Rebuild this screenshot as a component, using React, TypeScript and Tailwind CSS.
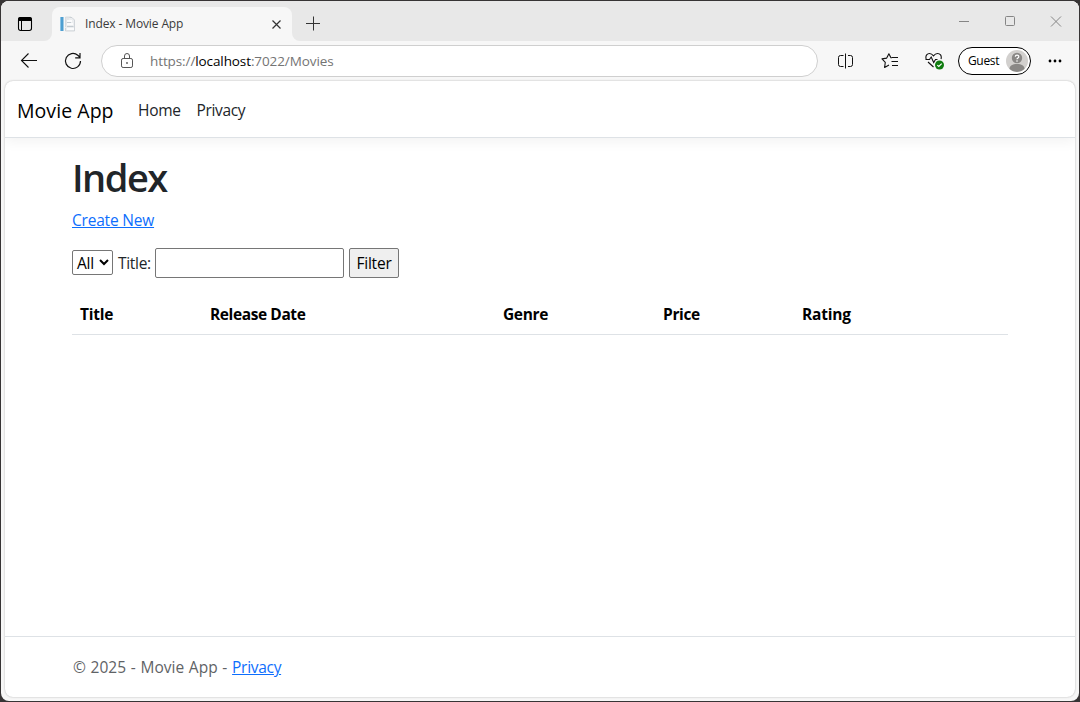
import React from 'react';

function TabActionsIcon() {
  return (
    <svg width="16" height="16" viewBox="0 0 16 16" fill="none">
      <rect x="1.5" y="1.5" width="13" height="13" rx="2.2" stroke="#000" strokeWidth="1.1" />
      <path d="M1 5V3.4A2.4 2.4 0 0 1 3.4 1h9.2a2.4 2.4 0 0 1 2.4 2.4V5z" fill="#000" />
      <path d="M4.5 5v9.500" stroke="#000" />
    </svg>
  );
}

function Favicon() {
  return (
    <svg width="17" height="16" viewBox="0 0 17 16" fill="none">
      <path d="M6.5 1h5.5l2 2v8H6.500z" fill="#e4e6e9" stroke="#cfd4d9" strokeWidth=".7" />
      <path d="M10.500 1.500h2.500l2.500 2.500v11H6.500v-3" fill="#eceef0" stroke="#c3c8ce" strokeWidth=".7" />
      <path d="M8 5h5M8 8h6M8 13h7" stroke="#fff" strokeWidth="1.300" />
      <path d="M8 10.500h6.500M8 6.500h4" stroke="#b8c0c8" strokeWidth=".8" />
      <rect x="1" y="1" width="3.500" height="14" fill="#4e9fd1" />
      <rect x="1" y="1" width="1" height="14" fill="#8cc4e6" />
    </svg>
  );
}

function TabStrip() {
  return (
    <div className="flex h-10 bg-[#f7f7f7]">
      <div className="flex w-[51px] rounded-br-lg bg-[#e8e8e8] pt-[15px] pl-4">
        <TabActionsIcon />
      </div>
      <div className="w-60 bg-[#e8e8e8] pt-1.5">
        <div className="flex h-[34px] items-center rounded-t-lg bg-[#f7f7f7] pr-[11px] pl-[7px]">
          <Favicon />
          <span className="ml-[9px] flex-1 text-[12px] tracking-[-0.12px] text-[#3b3b3b]">Index - Movie App</span>
          <svg className="mt-px" width="9" height="9" viewBox="0 0 9 9" stroke="#333" strokeWidth="1.2">
            <path d="M.5.5l8 8M8.500.5l-8 8" />
          </svg>
        </div>
      </div>
      <div className="flex flex-1 items-start rounded-bl-lg bg-[#e8e8e8] pt-[15px] pr-[17px] pl-[14px]">
        <svg width="16" height="16" viewBox="0 0 16 16" stroke="#333">
          <path d="M0 7.500h14M7.500.5v14" />
        </svg>
        <div className="ml-auto flex gap-[34px] text-[#858585]">
          <svg width="12" height="12" viewBox="0 0 12 12" stroke="currentColor"><path d="M1 5.500h10" /></svg>
          <svg width="12" height="12" viewBox="0 0 12 12" fill="none" stroke="currentColor"><rect x="1.500" y=".5" width="9" height="9" rx="1" /></svg>
          <svg width="12" height="12" viewBox="0 0 12 12" stroke="currentColor"><path d="M1 .5l10 10M11 .5L1 10.500" /></svg>
        </div>
      </div>
    </div>
  );
}

function Toolbar() {
  return (
    <div className="flex h-10 items-center bg-[#f7f7f7] pl-[19px]">
      <svg width="18" height="16" viewBox="0 0 18 16" fill="none" stroke="#111" strokeWidth="1.1">
        <path d="M17 7.500H1.500M8.500.5l-7 7 7 7" />
      </svg>
      <svg className="ml-[26px]" width="18" height="18" viewBox="0 0 18 18" fill="none" stroke="#111" strokeWidth="1.2">
        <path d="M16.500 9A7.500 7.500 0 1 1 13.800 3.200L16 5.300M16 1v4.800h-4.800" />
      </svg>
      <div className="ml-[19px] flex h-8 w-[717px] items-center rounded-full border border-[#cfcfcf] bg-white pl-[18px]">
        <svg width="14" height="16" viewBox="0 0 14 16" fill="none" stroke="#555">
          <rect x="1.500" y="5.500" width="11" height="9" rx="1.600" />
          <path d="M4.500 5.500V3a2.500 2.500 0 0 1 5 0v2.500" />
          <circle cx="7" cy="10" r=".9" fill="#555" stroke="none" />
        </svg>
        <span className="ml-4 text-[13.5px] tracking-[-0.1px] text-[#747474]">
          https://<span className="text-black">localhost</span>:7022/Movies
        </span>
      </div>
      <svg className="ml-5" width="16" height="16" viewBox="0 0 16 16" fill="none" stroke="#111">
        <path d="M5.500 2.500H2.500a2 2 0 0 0-2 2v7a2 2 0 0 0 2 2H5.500M10 2.500h2.500a2 2 0 0 1 2 2v7a2 2 0 0 1-2 2H10M7.500 .5v15" />
      </svg>
      <svg className="ml-[27px]" width="18" height="18" viewBox="0 0 18 18" fill="none" stroke="#111" strokeWidth="1.1" strokeLinejoin="round">
        <path d="M11 5.800L9.800 5.600 7.900 1.800 5.700 6.100 1 6.900l3.300 3.400-.7 5.200L8 13M11 5.500h6M10.500 9.500H17M11 13.500h6" />
      </svg>
      <svg className="ml-[26px]" width="19" height="18" viewBox="0 0 19 18" fill="none" stroke="#111" strokeWidth="1.1">
        <path d="M1.200 7C0 3.500 2.500 1.500 4.500 1.500 6.500 1.500 7.500 2.500 8.500 3.800 9.500 2.500 10.500 1.500 12.500 1.500c2.500 0 4.500 2 3.500 5.500M.5 7.500h4L6.200 5l2.500 5.500L10.500 7.500h2M3 10l5.500 5" />
        <circle cx="14.500" cy="13" r="4.500" fill="#107c10" stroke="none" />
        <path d="M12.300 13.100l1.500 1.400 2.900-2.900" stroke="#fff" strokeWidth="1.200" />
      </svg>
      <div className="ml-[14px] flex h-7 w-[73px] items-center justify-between rounded-full border border-black bg-white pr-[2px] pl-[9px] text-[12px] text-black">
        <span className="tracking-[-0.35px]">Guest</span>
        <svg width="22" height="22" viewBox="0 0 22 22">
          <circle cx="11" cy="11" r="11" fill="#d2d0ce" />
          <path d="M3.500 19c0-3.500 3-5 7.500-5s7.500 1.500 7.500 5A11 11 0 0 1 3.500 19z" fill="#8a8886" />
          <circle cx="11" cy="8" r="5.200" fill="#8a8886" />
          <path d="M9.300 6.800c0-2.300 3.500-2.300 3.500-.1 0 1.300-1.800 1.300-1.800 2.600" fill="none" stroke="#fff" strokeWidth="1.200" />
          <circle cx="11" cy="11" r=".8" fill="#fff" />
        </svg>
      </div>
      <svg className="ml-[17px]" width="14" height="4" viewBox="0 0 14 4">
        <circle cx="2" cy="2" r="1.400" /><circle cx="7" cy="2" r="1.400" /><circle cx="12" cy="2" r="1.400" />
      </svg>
    </div>
  );
}

const columns = [
  { label: 'Title', width: 'w-[130px]', tracking: 'tracking-[-0.2px]' },
  { label: 'Release Date', width: 'w-[293px]', tracking: 'tracking-[-0.4px]' },
  { label: 'Genre', width: 'w-[160px]', tracking: 'tracking-[-0.35px]' },
  { label: 'Price', width: 'w-[139px]', tracking: 'tracking-[-0.35px]' },
  { label: 'Rating', width: 'w-[214px]', tracking: 'tracking-[-0.2px]' },
];

function MoviesPage() {
  return (
    <div className="mx-1 flex h-[616px] flex-col overflow-hidden rounded-lg bg-white text-[15.5px] tracking-[-0.2px] text-[#212529] shadow-[0_0_2px_rgba(0,0,0,0.3)]">
      <header className="flex h-[57px] shrink-0 items-center border-b border-[#dee2e6] pt-[3px] pl-3 shadow-[0_4px_12px_rgba(0,0,0,0.05)]">
        <a className="w-[121px] text-[19.5px] tracking-[0.05px] text-black">Movie App</a>
        <a className="w-[58.5px] tracking-[-0.3px]">Home</a>
        <a className="tracking-[-0.35px]">Privacy</a>
      </header>
      <main className="flex-1 px-[67px] pt-4">
        <h1 className="h-12 text-[38px] leading-[47px] font-semibold tracking-[-1.5px]">Index</h1>
        <p className="mt-1.5 h-6 leading-[25px]"><a className="text-[#0d6efd] underline">Create New</a></p>
        <form className="mt-4 flex h-[30px] items-center" onSubmit={(e) => e.preventDefault()}>
          <button type="button" className="mb-px flex h-[25px] w-[41px] items-center justify-between rounded-[2px] border border-[#767676] bg-white pt-px pr-[3px] pl-1 text-black">
            <span className="pt-px">All</span>
            <svg className="mb-0.5" width="10" height="7" viewBox="0 0 10 7" fill="none" stroke="#000" strokeWidth="2"><path d="M1 1l4 4 4-4" /></svg>
          </button>
          <label className="ml-[5px] w-[37px] pt-0.5 tracking-[-0.3px]">Title:</label>
          <input className="h-[30px] w-[189px] rounded-[2px] border border-[#767676] bg-white" />
          <button type="submit" className="ml-[5px] h-[30px] w-[50px] rounded-[2px] border border-[#767676] bg-[#efefef] pt-px text-black">Filter</button>
        </form>
        <table className="mt-4 w-[936px] table-fixed border-collapse text-black">
          <thead>
            <tr className="h-10 border-b border-[#dee2e6]">
              {columns.map((c) => (
                <th key={c.label} className={`${c.width} ${c.tracking} px-2 pt-0.5 pb-0 text-left font-bold`}>{c.label}</th>
              ))}
            </tr>
          </thead>
        </table>
      </main>
      <footer className="h-[61px] shrink-0 border-t border-[#dee2e6] pr-[67px] pl-[68px] leading-[61px] tracking-[0px] text-[#5f6366] [word-spacing:0.7px]">
        © 2025 - Movie App - <a className="tracking-[-0.3px] text-[#0d6efd] underline">Privacy</a>
      </footer>
    </div>
  );
}

export default function App() {
  return (
    <div className="h-[702px] w-[1080px] bg-[#373435] p-px font-['Open_Sans','Noto_Sans',sans-serif]">
      <div className="h-[700px] overflow-hidden rounded-lg bg-[#f7f7f7]">
        <TabStrip />
        <Toolbar />
        <MoviesPage />
      </div>
    </div>
  );
}
